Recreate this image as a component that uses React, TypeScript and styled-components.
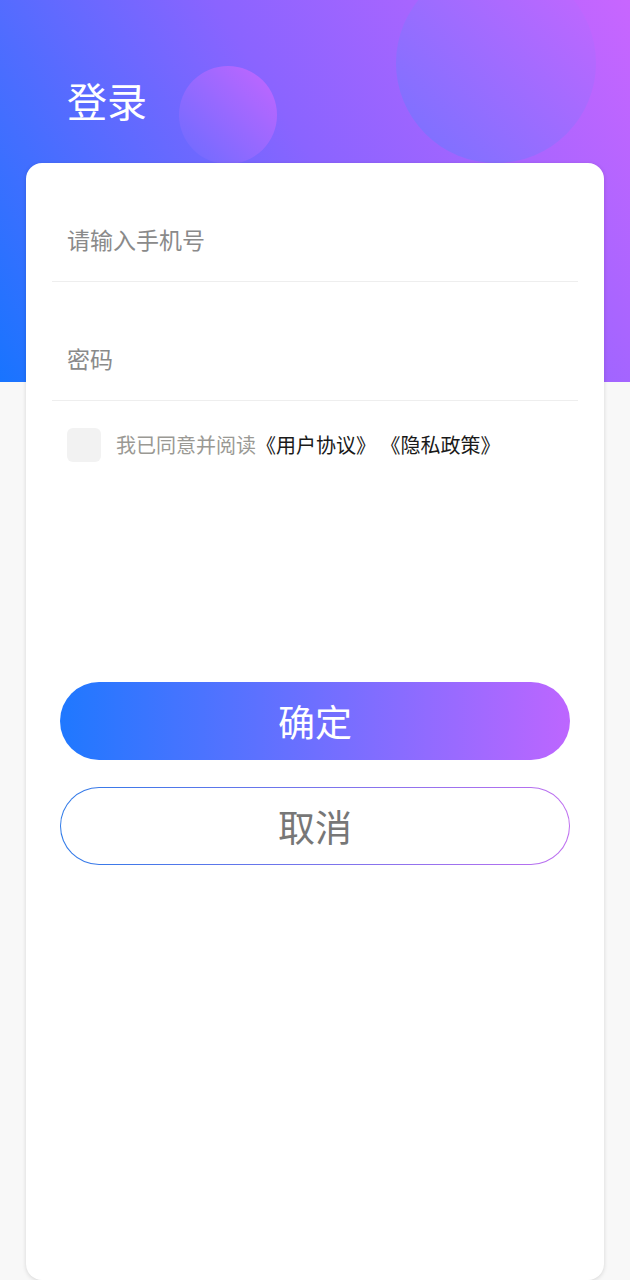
import React from "react";
import styled, { createGlobalStyle } from "styled-components";

const GlobalStyle = createGlobalStyle`
  html, body {
    margin: 0;
    padding: 0;
    background: #f8f8f8;
  }
  body {
    font-family: "Noto Sans CJK SC", "Noto Sans", sans-serif;
  }
  * { box-sizing: border-box; }
`;

const Page = styled.div`
  position: relative;
  width: 630px;
  height: 1280px;
  overflow: hidden;
  background-color: #f8f8f8;
  background-image: linear-gradient(58deg, #1874ff 0%, #8a64ff 52%, #c866ff 100%);
  background-size: 100% 382px;
  background-repeat: no-repeat;
  display: flex;
  flex-direction: column;
`;

const Bubble = styled.div<{ $size: number; $top: number; $left: number; $from: string; $to: string }>`
  position: absolute;
  width: ${(p) => p.$size}px;
  height: ${(p) => p.$size}px;
  top: ${(p) => p.$top}px;
  left: ${(p) => p.$left}px;
  border-radius: 50%;
  background: linear-gradient(to bottom left, ${(p) => p.$from}, ${(p) => p.$to});
`;

const Header = styled.header`
  position: relative;
  height: 163px;
  padding: 76px 0 0 67px;
  flex-shrink: 0;
`;

const Title = styled.h1`
  margin: 0;
  font-size: 40px;
  line-height: 48px;
  font-weight: 400;
  color: #ffffff;
`;

const Card = styled.main`
  position: relative;
  margin: 0 26px;
  height: 1117px;
  background: #ffffff;
  border-radius: 16px;
  box-shadow: 0 1px 4px rgba(0, 0, 0, 0.14);
  padding: 0 26px;
  display: flex;
  flex-direction: column;
`;

const Field = styled.div`
  height: 119px;
  padding: 58px 0 0 15px;
  border-bottom: 1px solid #eeeeee;
`;

const Input = styled.input`
  width: 100%;
  border: none;
  outline: none;
  padding: 0;
  background: transparent;
  font-family: "Noto Sans CJK SC", sans-serif;
  font-size: 23px;
  line-height: 36px;
  height: 36px;
  color: #333;
  &::placeholder {
    color: #8a8a8a;
  }
`;

const Agreement = styled.label`
  display: flex;
  align-items: center;
  gap: 15px;
  margin-top: 27px;
  padding-left: 15px;
  font-size: 20px;
  line-height: 34px;
  color: #9a9994;
`;

const CheckBox = styled.span`
  width: 34px;
  height: 34px;
  border-radius: 6px;
  background: #f2f2f2;
  flex-shrink: 0;
`;

const Link = styled.span`
  color: #1a1a1a;
`;

const Actions = styled.div`
  display: flex;
  flex-direction: column;
  gap: 27px;
  margin: 220px 8px 0;
`;

const Button = styled.button<{ $primary?: boolean }>`
  height: 78px;
  border-radius: 39px;
  font-family: "Noto Sans CJK SC", sans-serif;
  font-size: 37px;
  line-height: 1;
  cursor: pointer;
  ${(p) =>
    p.$primary
      ? `
    border: none;
    color: #ffffff;
    background: linear-gradient(to right, #1f78ff, #bd66ff);
  `
      : `
    border: 1px solid transparent;
    color: #777777;
    background: linear-gradient(#ffffff, #ffffff) padding-box,
      linear-gradient(to right, #2f7ae8, #bf6ff0) border-box;
  `}
`;

export default function App() {
  return (
    <>
      <GlobalStyle />
      <Page>
        <Bubble $size={200} $top={-37} $left={396} $from="#c866ff" $to="#7572ff" />
        <Bubble $size={98} $top={66} $left={179} $from="#c466ff" $to="#6a6cff" />
        <Header>
          <Title>登录</Title>
        </Header>
        <Card>
          <Field>
            <Input type="tel" placeholder="请输入手机号" />
          </Field>
          <Field>
            <Input type="password" placeholder="密码" />
          </Field>
          <Agreement>
            <CheckBox />
            <span>
              我已同意并阅读<Link>《用户协议》 《隐私政策》</Link>
            </span>
          </Agreement>
          <Actions>
            <Button $primary>确定</Button>
            <Button>取消</Button>
          </Actions>
        </Card>
      </Page>
    </>
  );
}
